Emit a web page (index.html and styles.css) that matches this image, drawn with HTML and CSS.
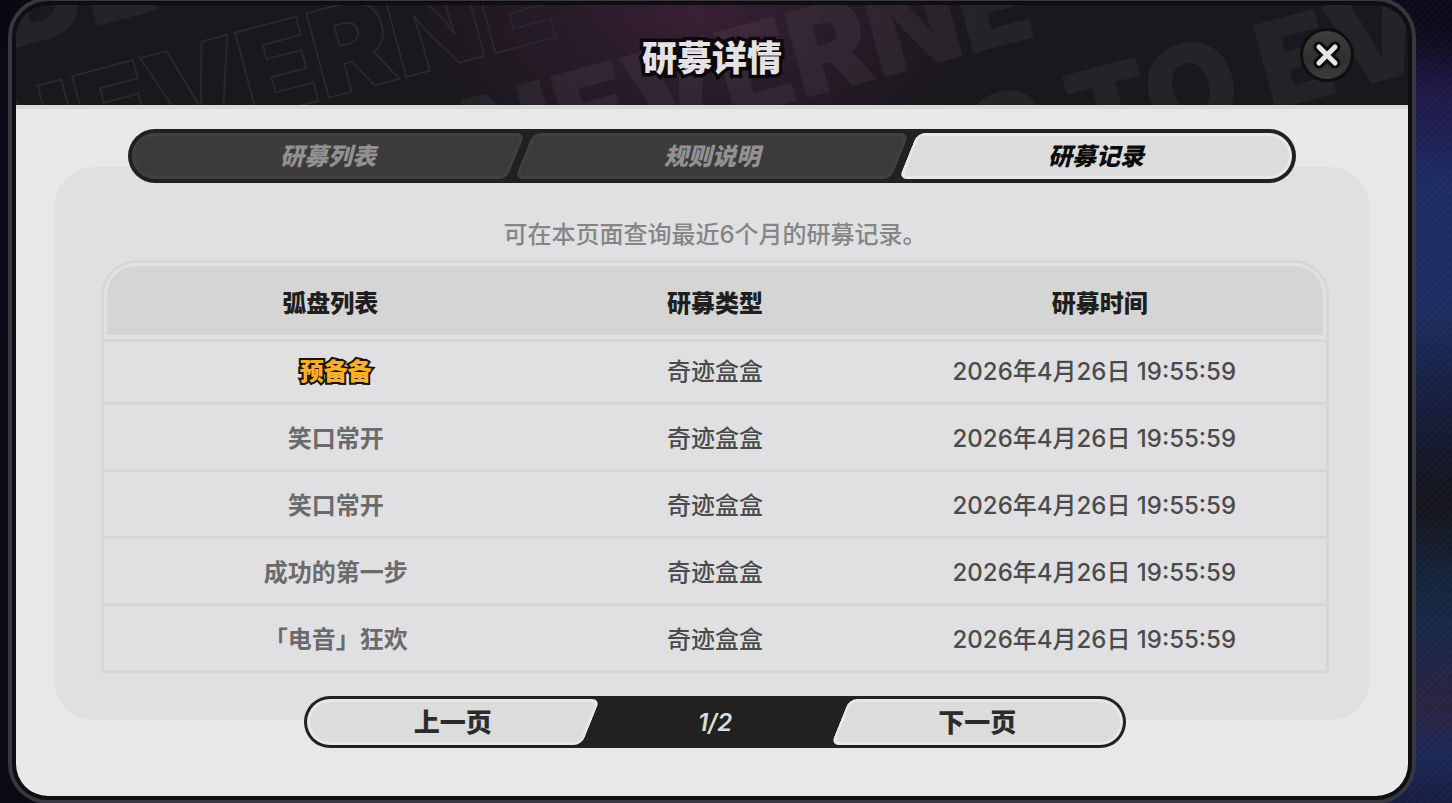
FILE: index.html
```html
<!DOCTYPE html>
<html lang="zh-CN">

<head>
    <meta charset="UTF-8">
    <meta name="viewport" content="width=device-width, initial-scale=1.0">
    <title>研募详情</title>
    <link rel="stylesheet" href="styles.css">
</head>

<body>
    <main class="modal">
        <header class="modal-header">
            <svg class="header-art" aria-hidden="true">
                <text class="art-fill" transform="translate(-8 45) rotate(-15)">DE</text>
                <text class="art-line" transform="translate(-16 181) rotate(-15)">NEVERNE</text>
                <text class="art-fill" transform="translate(462 181) rotate(-15)">NEVERNE</text>
                <text class="art-fill" transform="translate(888 204) rotate(-15)">SS TO EV</text>
            </svg>
            <h1>研募详情</h1>
            <button type="button" class="close" aria-label="关闭">
                <svg width="32" height="32" viewBox="0 0 32 32">
                    <path class="x-edge" d="M8 8L24 24M24 8L8 24" />
                    <path class="x-face" d="M8 8L24 24M24 8L8 24" />
                </svg>
            </button>
        </header>

        <section class="modal-body">
            <nav class="tabs">
                <button type="button" class="slant cap-left"><span>研募列表</span></button>
                <button type="button" class="slant"><span>规则说明</span></button>
                <button type="button" class="slant cap-right active"><span>研募记录</span></button>
            </nav>

            <div class="panel">
                <p class="notice">可在本页面查询最近6个月的研募记录。</p>

                <table class="records">
                    <thead>
                        <tr>
                            <th>弧盘列表</th>
                            <th>研募类型</th>
                            <th>研募时间</th>
                        </tr>
                    </thead>
                    <tbody>
                        <tr>
                            <td class="rare">预备备</td>
                            <td>奇迹盒盒</td>
                            <td>2026年4月26日 19:55:59</td>
                        </tr>
                        <tr>
                            <td>笑口常开</td>
                            <td>奇迹盒盒</td>
                            <td>2026年4月26日 19:55:59</td>
                        </tr>
                        <tr>
                            <td>笑口常开</td>
                            <td>奇迹盒盒</td>
                            <td>2026年4月26日 19:55:59</td>
                        </tr>
                        <tr>
                            <td>成功的第一步</td>
                            <td>奇迹盒盒</td>
                            <td>2026年4月26日 19:55:59</td>
                        </tr>
                        <tr>
                            <td>「电音」狂欢</td>
                            <td>奇迹盒盒</td>
                            <td>2026年4月26日 19:55:59</td>
                        </tr>
                    </tbody>
                </table>

                <div class="pager">
                    <button type="button" class="slant cap-left active"><span>上一页</span></button>
                    <span class="page-no">1/2</span>
                    <button type="button" class="slant cap-right active"><span>下一页</span></button>
                </div>
            </div>
        </section>
    </main>
</body>

</html>
```

FILE: styles.css
```css
* {
    box-sizing: border-box;
}

body {
    margin: 0;
    min-height: 100vh;
    padding: 1px 40px 3px 12px;
    font-family: Inter, "Noto Sans CJK SC", sans-serif;
    background:
        linear-gradient(90deg, rgba(10, 8, 16, 0.9) 0, rgba(10, 8, 16, 0.9) 50%, transparent 50%),
        repeating-linear-gradient(135deg, rgba(255, 255, 255, 0.02) 0 2px, transparent 2px 5px),
        linear-gradient(180deg, #0b0a18 0, #0e0c1e 5%, #1f1745 11%, #1d2d66 24%, #1d2d63 38%, #14192e 55%, #14141a 63%, #15243c 72%, #1b2748 80%, #2a2340 88%, #1d2858 94%, #171d40 100%);
}

button {
    padding: 0;
    border: none;
    background: none;
    font-family: inherit;
    cursor: pointer;
}

.modal {
    display: flex;
    flex-direction: column;
    min-height: calc(100vh - 4px);
    border: 4px solid #0f0f11;
    border-radius: 36px;
    box-shadow: 0 0 0 4px #38373f;
    background-color: #0f0f11;
    overflow: hidden;
}

/* Header */
.modal-header {
    position: relative;
    display: grid;
    grid-template-columns: 1fr auto 1fr;
    align-items: center;
    height: 104px;
    padding: 0 54px;
    border-bottom: 4px solid #d9d9da;
    background:
        radial-gradient(ellipse 290px 190px at 49% 0, #3a2036 0, rgba(48, 29, 46, 0.7) 45%, transparent 100%),
        #19181c;
}

.header-art {
    position: absolute;
    inset: 0;
    width: 100%;
    height: 100%;
    font-family: Inter, sans-serif;
    font-size: 120px;
    font-weight: 900;
}

.art-fill {
    fill: rgba(255, 255, 255, 0.05);
}

.art-line {
    fill: none;
    stroke: #29282d;
    stroke-width: 2px;
}

.modal-header h1 {
    position: relative;
    grid-column: 2;
    margin: 0;
    padding-top: 6px;
    font-size: 35px;
    font-weight: 900;
    line-height: 48px;
    color: #e4e2e4;
    -webkit-text-stroke: 7px #0b090b;
    paint-order: stroke fill;
}

.close {
    position: relative;
    display: grid;
    place-items: center;
    justify-self: end;
    width: 54px;
    height: 54px;
    border: 3px solid #0e0e0f;
    border-radius: 50%;
    background: linear-gradient(#3f3f3d, #2f2f2f 60%, #3c3c3a);
}

.close path {
    fill: none;
    stroke-linecap: round;
}

.x-edge {
    stroke: #0c0c0c;
    stroke-width: 11px;
}

.x-face {
    stroke: #e4e4e4;
    stroke-width: 5px;
}

/* Body */
.modal-body {
    flex: 1;
    padding: 20px 38px 76px;
    background-color: #e8e8e9;
}

.tabs,
.pager {
    position: relative;
    display: flex;
    background-color: #222122;
    overflow: hidden;
}

.tabs {
    max-width: 1168px;
    height: 54px;
    margin: 0 auto;
    padding: 4px;
    border-radius: 27px;
}

/* Slanted buttons, drawn as two overlapping plates */
.slant {
    --face: #3c3a3b;
    --edge: #424041;
    position: relative;
    flex: 1;
    padding-bottom: 4px;
    color: #929092;
    font-size: 24px;
    font-weight: 800;
}

.slant.active {
    --face: #dcdcdc;
    --edge: #e8e8e8;
    color: #0b0b0b;
}

.slant span {
    position: relative;
    z-index: 1;
}

.slant::before,
.slant::after {
    content: "";
    position: absolute;
    top: 0;
    bottom: 0;
    background-color: var(--face);
    border: 3px solid var(--edge);
}

.slant::before {
    left: 8px;
    right: 8px;
    border-radius: 8px;
    transform: skewX(-22deg);
}

.slant::after {
    display: none;
}

.cap-left::before {
    left: 50%;
    border-left: none;
    border-radius: 0 8px 8px 0;
}

.cap-left::after {
    display: block;
    left: 0;
    right: 40%;
    border-right: none;
    border-radius: 24px 0 0 24px;
}

.cap-right::before {
    right: 50%;
    border-right: none;
    border-radius: 8px 0 0 8px;
}

.cap-right::after {
    display: block;
    left: 40%;
    right: 0;
    border-left: none;
    border-radius: 0 24px 24px 0;
}

.tabs .slant {
    font-style: italic;
}

.tabs .slant+.slant {
    margin-left: -8px;
}

.panel {
    margin-top: -16px;
    padding: 50px 41px 0 47px;
    border-radius: 40px;
    background-color: #e0e0e2;
}

.notice {
    margin: 0 0 8px;
    font-size: 24px;
    font-weight: 500;
    line-height: 35px;
    text-align: center;
    color: #858586;
}

/* Records */
.records {
    width: 100%;
    table-layout: fixed;
    border: 3px solid #d6d6d8;
    border-radius: 36px 36px 0 0;
    border-spacing: 0;
    text-align: center;
    font-size: 24px;
    line-height: 32px;
    color: #4b4b4c;
}

.records th {
    height: 76px;
    padding: 6px 42px 0;
    border: 0 solid #e2e2e3;
    border-width: 3px 0 4px;
    background-color: #d5d5d5;
    font-weight: 800;
    color: #1f1f1f;
}

.records th:first-child {
    border-left-width: 3px;
    border-top-left-radius: 32px;
}

.records th:last-child {
    border-right-width: 3px;
    border-top-right-radius: 32px;
}

.records td {
    height: 67px;
    padding: 3px 56px 0;
    border-top: 3px solid #d6d6d8;
    font-weight: 500;
    white-space: nowrap;
}

.records tbody tr:first-child td {
    height: 63px;
    padding-top: 0;
}

.records th:first-child,
.records td:first-child {
    padding-right: 0;
}

.records th:last-child,
.records td:last-child {
    padding-left: 0;
}

.records td:first-child {
    font-weight: 700;
    color: #6b6b6c;
}

.records td.rare {
    font-weight: 800;
    color: #f9b02b;
    -webkit-text-stroke: 4px #1c1408;
    paint-order: stroke fill;
}

/* Pager, hangs over the bottom edge of the panel */
.pager {
    top: 28px;
    max-width: 822px;
    height: 52px;
    margin: -5px auto 0;
    padding: 3px;
    border-radius: 26px;
}

.pager .slant {
    flex: 5;
    font-size: 26px;
    color: #2c2c2c;
}

.page-no {
    flex: 4;
    align-self: center;
    text-align: center;
    font-size: 24px;
    font-style: italic;
    font-weight: 600;
    color: #dcdcdc;
}
```
